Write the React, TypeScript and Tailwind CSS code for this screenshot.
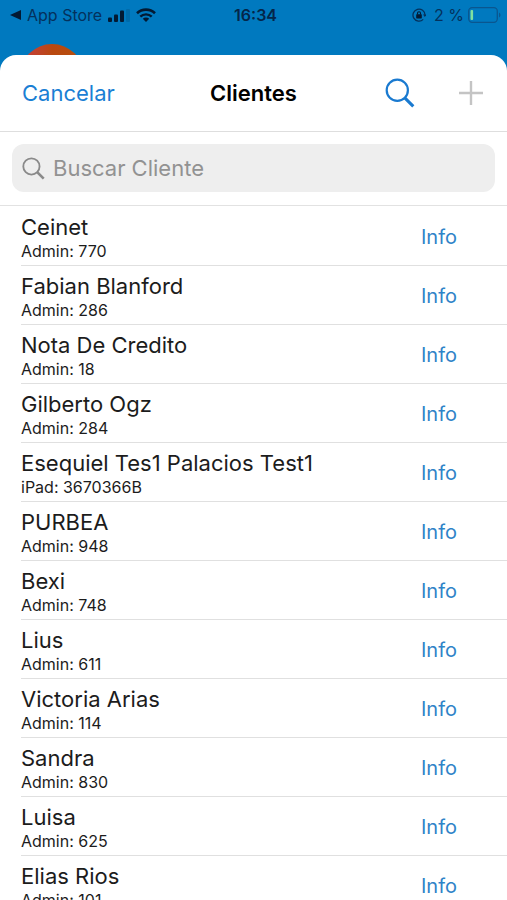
import { useState } from "react";

const CLIENTS = [
  { name: "Ceinet", source: "Admin", code: "770" },
  { name: "Fabian Blanford", source: "Admin", code: "286" },
  { name: "Nota De Credito", source: "Admin", code: "18" },
  { name: "Gilberto Ogz", source: "Admin", code: "284" },
  { name: "Esequiel Tes1 Palacios Test1", source: "iPad", code: "3670366B" },
  { name: "PURBEA", source: "Admin", code: "948" },
  { name: "Bexi", source: "Admin", code: "748" },
  { name: "Lius", source: "Admin", code: "611" },
  { name: "Victoria Arias", source: "Admin", code: "114" },
  { name: "Sandra", source: "Admin", code: "830" },
  { name: "Luisa", source: "Admin", code: "625" },
  { name: "Elias Rios", source: "Admin", code: "101" },
];

function SearchIcon({ className, strokeWidth }: { className: string; strokeWidth: number }) {
  return (
    <svg
      viewBox="0 0 30 30"
      fill="none"
      stroke="currentColor"
      strokeWidth={strokeWidth}
      className={className}
      aria-hidden
    >
      <circle cx="12.3" cy="12.3" r="10.6" />
      <path d="M19.8 19.8l8.5 8.5" strokeWidth={strokeWidth * 1.4} />
    </svg>
  );
}

function StatusBar() {
  return (
    <div className="grid h-[30px] grid-cols-[1fr_auto_1fr] items-center pr-1.5 pl-2.5 text-[#04315c]">
      <div className="flex items-center gap-1.5">
        <a href="#app-store" className="flex items-center gap-1.5 text-base">
          <svg viewBox="0 0 11 10" className="h-2.5 w-[11px]" fill="#031a33" aria-hidden>
            <path d="M0 5L11 0v10z" />
          </svg>
          App Store
        </a>
        {/* Signal strength, last bar dimmed */}
        <svg viewBox="0 0 22 13" className="h-[13px] w-[22px]" fill="#031a33" aria-hidden>
          <rect x="0" y="8.5" width="4" height="4.5" rx="1" />
          <rect x="6" y="5.5" width="4" height="7.5" rx="1" />
          <rect x="12" y="1.5" width="4" height="11.5" rx="1" />
          <rect x="18" y="0" width="4" height="13" rx="1" opacity="0.15" />
        </svg>
        <svg viewBox="0 0 20 14" className="h-3.5 w-5" fill="none" stroke="#031a33" aria-hidden>
          <path d="M1 5.2a13 13 0 0 1 18 0" strokeWidth="2.6" />
          <path d="M4.3 8.6a8.3 8.3 0 0 1 11.4 0" strokeWidth="2.4" />
          <path d="M10 14l-3.2-3.3a4.6 4.6 0 0 1 6.4 0z" fill="#031a33" stroke="none" />
        </svg>
      </div>
      <time className="text-base font-semibold text-[#04264a]">16:34</time>
      <div className="flex items-center justify-end gap-1 text-base">
        {/* Rotation lock */}
        <svg viewBox="0 0 14 14" className="mr-1 size-3.5" fill="none" stroke="currentColor" aria-hidden>
          <path d="M11.2 11.4A6 6 0 1 1 13 7" strokeWidth="1.3" />
          <path d="M11 6.5h3.6L12.8 9z" fill="currentColor" stroke="none" />
          <rect x="4.2" y="6.2" width="5.6" height="4.2" rx="0.6" fill="#031a33" stroke="none" />
          <path d="M5.5 6.6V5.2a1.5 1.5 0 0 1 3 0v1.4" stroke="#031a33" strokeWidth="1.1" />
        </svg>
        <span>2 %</span>
        <svg viewBox="0 0 33 16" className="h-4 w-[33px]" aria-hidden>
          <rect x="0.7" y="0.7" width="28.6" height="14.6" rx="3.5" fill="none" stroke="#0a568f" strokeWidth="1.3" />
          <rect x="2.5" y="3" width="2.6" height="10" rx="1" fill="#7fe0a0" />
          <path d="M31 5.5a2.8 2.8 0 0 1 0 5z" fill="#0a568f" />
        </svg>
      </div>
    </div>
  );
}

export default function App() {
  const [query, setQuery] = useState("");
  const clients = CLIENTS.filter((c) => c.name.toLowerCase().includes(query.toLowerCase()));

  return (
    <div className="flex h-screen flex-col overflow-hidden bg-[#0079bf] font-['Inter','Liberation_Sans',sans-serif]">
      <StatusBar />
      {/* Top of the logo on the page behind the sheet */}
      <div className="h-[25px] overflow-hidden pt-3.5 pl-5" aria-hidden>
        <div className="h-16 w-16 rounded-full bg-linear-to-r from-[#c83c3c] via-[#b9480f] to-[#b5500f]" />
      </div>

      <main className="flex min-h-0 flex-1 flex-col overflow-hidden rounded-t-2xl bg-white">
        <header className="grid shrink-0 grid-cols-[1fr_auto_1fr] items-center border-b border-[#dedede] px-[22px] py-5">
          <button type="button" className="justify-self-start text-[22px] leading-9 text-[#1a7fd4]">
            Cancelar
          </button>
          <h1 className="text-[22px] leading-9 font-semibold text-black">Clientes</h1>
          <div className="flex items-center justify-end gap-11 pr-0.5">
            <button type="button" aria-label="Buscar" className="text-[#1a7ad0]">
              <SearchIcon className="size-[30px]" strokeWidth={2.2} />
            </button>
            <button type="button" aria-label="Agregar" className="text-[#c4c4c4]">
              <svg viewBox="0 0 24 24" className="size-6" stroke="currentColor" strokeWidth="2.4" aria-hidden>
                <path d="M12 0v24M0 12h24" />
              </svg>
            </button>
          </div>
        </header>

        <div className="shrink-0 border-b border-[#e2e2e2] px-3 pt-3 pb-[13px]">
          <label className="flex h-12 items-center gap-2 rounded-xl bg-[#eeeeee] px-2.5 text-[#8a8a8a]">
            <SearchIcon className="size-[23px] shrink-0" strokeWidth={2.4} />
            <input
              type="text"
              value={query}
              onChange={(e) => setQuery(e.target.value)}
              placeholder="Buscar Cliente"
              aria-label="Buscar Cliente"
              className="min-w-0 flex-1 bg-transparent text-[22px] text-black outline-none placeholder:text-[#929292]"
            />
          </label>
        </div>

        <ul className="min-h-0 flex-1 overflow-hidden pt-px pl-[21px]">
          {clients.map((c) => (
            <li key={c.name} className="flex items-center border-b border-[#e0e0e0] pt-1.5 pr-[50px] pb-1">
              <div className="min-w-0 flex-1 text-[#1c1c1c]">
                <p className="truncate text-[22px] leading-7">{c.name}</p>
                <p className="text-base leading-5">
                  {c.source}: {c.code}
                </p>
              </div>
              <button type="button" className="text-xl text-[#2f83c8]">
                Info
              </button>
            </li>
          ))}
        </ul>
      </main>
    </div>
  );
}
